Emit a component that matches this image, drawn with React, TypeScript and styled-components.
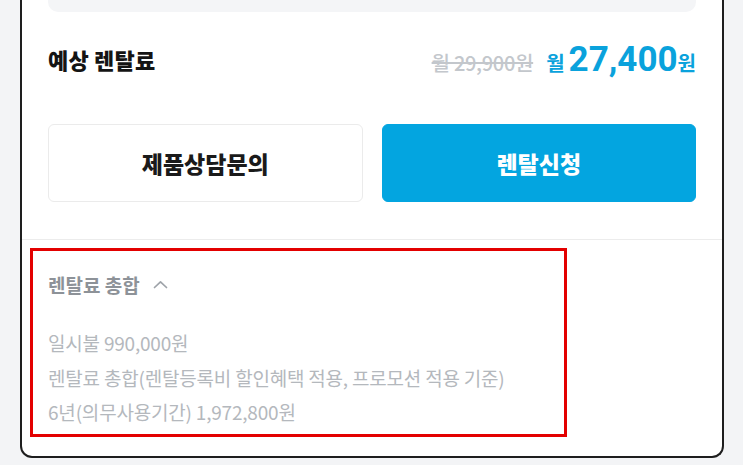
import React from "react";
import styled, { createGlobalStyle } from "styled-components";

const GlobalStyle = createGlobalStyle`
  html, body {
    margin: 0;
    padding: 0;
    background: #f3f4f6;
    font-family: "Noto Sans CJK KR", "Noto Sans", sans-serif;
  }
`;

const Page = styled.div`
  width: 743px;
  height: 465px;
  overflow: hidden;
  padding-left: 20px;
  box-sizing: border-box;
`;

const Card = styled.div`
  width: 704px;
  height: 458px;
  box-sizing: border-box;
  background: #fff;
  border: 2px solid #1e1e1e;
  border-top: none;
  border-radius: 0 0 12px 12px;
  display: flex;
  flex-direction: column;
`;

const Inner = styled.div`
  padding: 0 26px;
  display: flex;
  flex-direction: column;
`;

const TopBar = styled.div`
  height: 12px;
  background: #f4f5f7;
  border-radius: 0 0 10px 10px;
`;

const PriceRow = styled.div`
  height: 44px;
  margin-top: 25px;
  display: flex;
  align-items: center;
  justify-content: space-between;
`;

const Title = styled.h2`
  margin: 0;
  font-size: 22px;
  font-weight: 800;
  color: #141414;
  letter-spacing: 0.2px;
`;

const Prices = styled.div`
  display: flex;
  align-items: baseline;
  gap: 13px;
`;

const OldPrice = styled.span`
  font-size: 20px;
  font-weight: 500;
  color: #c3c7cc;
  text-decoration: line-through;
  letter-spacing: -0.3px;
`;

const NewPrice = styled.span`
  color: #0aa2dc;
  font-weight: 700;
  display: flex;
  align-items: baseline;
`;

const Unit = styled.span<{ $gap?: number }>`
  font-size: 20px;
  margin-right: ${(p) => p.$gap ?? 0}px;
`;

const Amount = styled.span`
  font-family: Roboto, "Noto Sans", sans-serif;
  font-size: 35px;
  line-height: 1;
`;

const ButtonRow = styled.div`
  display: flex;
  gap: 19px;
  margin-top: 43px;
`;

const ActionButton = styled.button<{ $primary?: boolean }>`
  flex: 1;
  height: 78px;
  border-radius: 6px;
  border: 1px solid ${(p) => (p.$primary ? "#03a5e0" : "#ebebeb")};
  background: ${(p) => (p.$primary ? "#03a5e0" : "#fff")};
  color: ${(p) => (p.$primary ? "#fff" : "#1a1a1a")};
  font-family: inherit;
  font-size: 23px;
  font-weight: 800;
  cursor: pointer;
`;

const Divider = styled.hr`
  margin: 37px 0 0;
  border: none;
  border-top: 1px solid #ececec;
`;

const Summary = styled.section`
  margin: 8px 0 0 8px;
  width: 537px;
  height: 189px;
  box-sizing: border-box;
  border: 3px solid #e30000;
  padding: 18px 0 0 15px;
  display: flex;
  flex-direction: column;
`;

const SummaryTitle = styled.div`
  display: flex;
  align-items: center;
  gap: 13px;
  height: 30px;
  font-size: 19px;
  font-weight: 700;
  color: #8d9298;
`;

const SummaryList = styled.div`
  margin-top: 27px;
  display: flex;
  flex-direction: column;
`;

const SummaryLine = styled.div`
  height: 34.5px;
  line-height: 34.5px;
  font-size: 19px;
  color: #b4b8bd;
  letter-spacing: -0.2px;
`;

const ChevronUp = () => (
  <svg width="15" height="9" viewBox="0 0 15 9" fill="none">
    <polyline
      points="1.5,7.5 7.5,1.8 13.5,7.5"
      stroke="#9ea3a9"
      strokeWidth="1.7"
      strokeLinecap="round"
      strokeLinejoin="round"
    />
  </svg>
);

const lines = [
  "일시불 990,000원",
  "렌탈료 총합(렌탈등록비 할인혜택 적용, 프로모션 적용 기준)",
  "6년(의무사용기간) 1,972,800원",
];

export default function App() {
  return (
    <>
      <GlobalStyle />
      <Page>
        <Card>
          <Inner>
            <TopBar />
            <PriceRow>
              <Title>예상 렌탈료</Title>
              <Prices>
                <OldPrice>월 29,900원</OldPrice>
                <NewPrice>
                  <Unit $gap={4}>월</Unit>
                  <Amount>27,400</Amount>
                  <Unit>원</Unit>
                </NewPrice>
              </Prices>
            </PriceRow>
            <ButtonRow>
              <ActionButton>제품상담문의</ActionButton>
              <ActionButton $primary>렌탈신청</ActionButton>
            </ButtonRow>
          </Inner>
          <Divider />
          <Summary>
            <SummaryTitle>
              렌탈료 총합
              <ChevronUp />
            </SummaryTitle>
            <SummaryList>
              {lines.map((l) => (
                <SummaryLine key={l}>{l}</SummaryLine>
              ))}
            </SummaryList>
          </Summary>
        </Card>
      </Page>
    </>
  );
}
